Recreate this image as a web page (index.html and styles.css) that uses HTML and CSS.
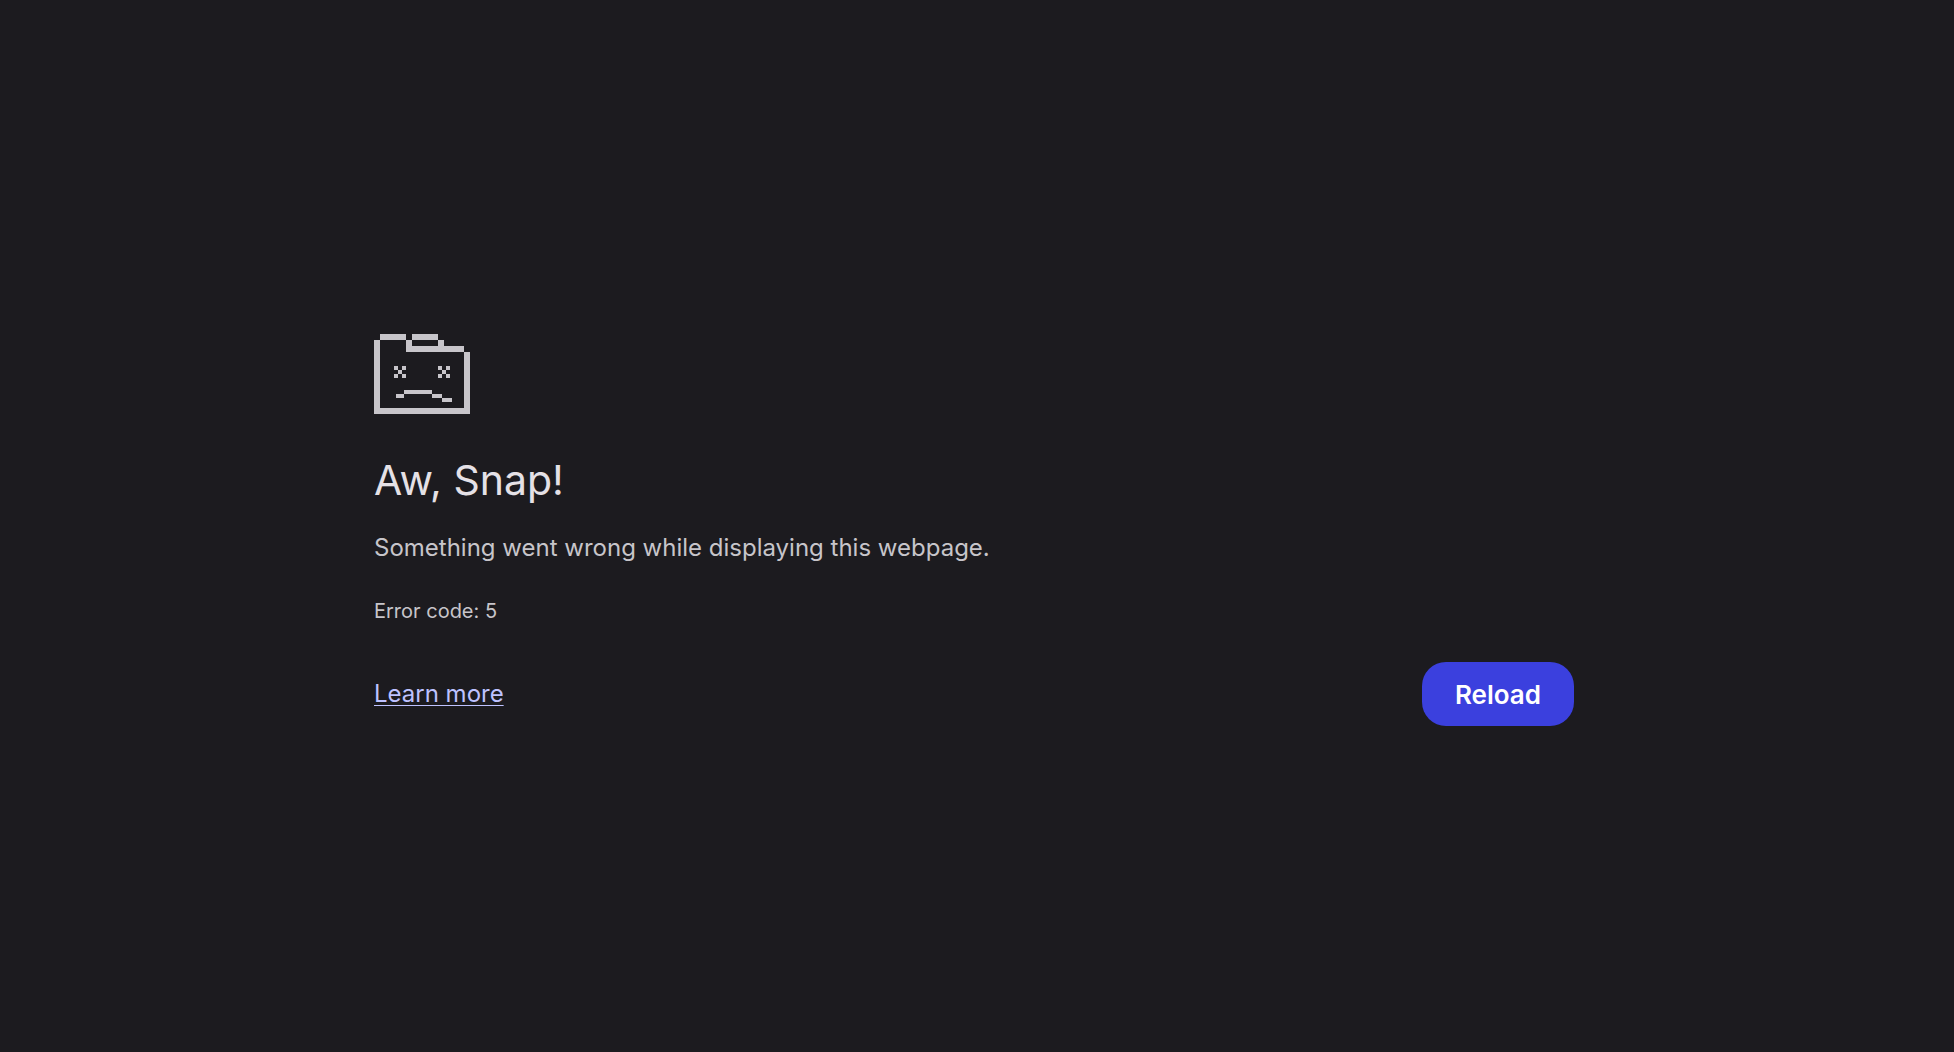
FILE: index.html
```
<!DOCTYPE html>
<html lang="en">
<head>
    <meta charset="utf-8">
    <meta name="viewport" content="width=device-width, initial-scale=1">
    <title>Aw, Snap!</title>
    <link rel="stylesheet" href="styles.css">
</head>
<body>
    <main class="error-page">
        <svg class="icon" viewBox="0 0 96 80" shape-rendering="crispEdges" aria-hidden="true">
            <!-- folder -->
            <path d="M6 0h26v6H6zM38 0h26v6H38zM32 6h6v6h-6zM64 6h6v6h-6zM32 12h58v6H32zM0 6h6v68h84V18h6v62H0z"/>
            <!-- eyes -->
            <path d="M20 32h4v4h-4zM28 32h4v4h-4zM24 36h4v4h-4zM20 40h4v4h-4zM28 40h4v4h-4z"/>
            <path d="M64 32h4v4h-4zM72 32h4v4h-4zM68 36h4v4h-4zM64 40h4v4h-4zM72 40h4v4h-4z"/>
            <!-- mouth -->
            <path d="M30 56h28v4H30zM22 60h8v4h-8zM58 60h10v4H58zM68 64h10v4H68z"/>
        </svg>

        <h1>Aw, Snap!</h1>
        <p class="message">Something went wrong while displaying this webpage.</p>
        <p class="error-code">Error code: 5</p>

        <div class="actions">
            <a class="learn-more" href="#">Learn more</a>
            <button class="btn" type="button" onclick="location.reload()">Reload</button>
        </div>
    </main>
</body>
</html>
```

FILE: styles.css
```
* {
    box-sizing: border-box;
}

body {
    margin: 0;
    min-height: 100vh;
    padding: 334px 40px 0 34px;
    font-family: Inter, "Liberation Sans", sans-serif;
    background-color: #1c1b1f;
    color: #c7c5ca;
}

.error-page {
    max-width: 1200px;
    margin: 0 auto;
}

.icon {
    display: block;
    width: 96px;
    height: 80px;
    fill: #c7c5ca;
}

h1 {
    margin: 40px 0 24px;
    font-size: 41px;
    font-weight: 400;
    line-height: 52px;
    color: #e5e1e6;
}

p {
    margin: 0;
}

.message {
    font-size: 24px;
    line-height: 36px;
}

.error-code {
    margin-top: 31px;
    font-size: 20px;
    line-height: 28px;
}

.actions {
    display: flex;
    justify-content: space-between;
    align-items: center;
    margin-top: 37px;
}

.learn-more {
    font-size: 24px;
    line-height: 28px;
    color: #bec2ff;
    text-underline-offset: 3px;
    text-decoration-thickness: 1px;
}

.btn {
    min-width: 152px;
    height: 64px;
    padding: 0 32px;
    font-family: inherit;
    font-size: 26px;
    font-weight: 600;
    color: white;
    background-color: #3b40de;
    border: none;
    border-radius: 24px;
    cursor: pointer;
}

.btn:hover {
    background-color: #4a50ea;
}
```
